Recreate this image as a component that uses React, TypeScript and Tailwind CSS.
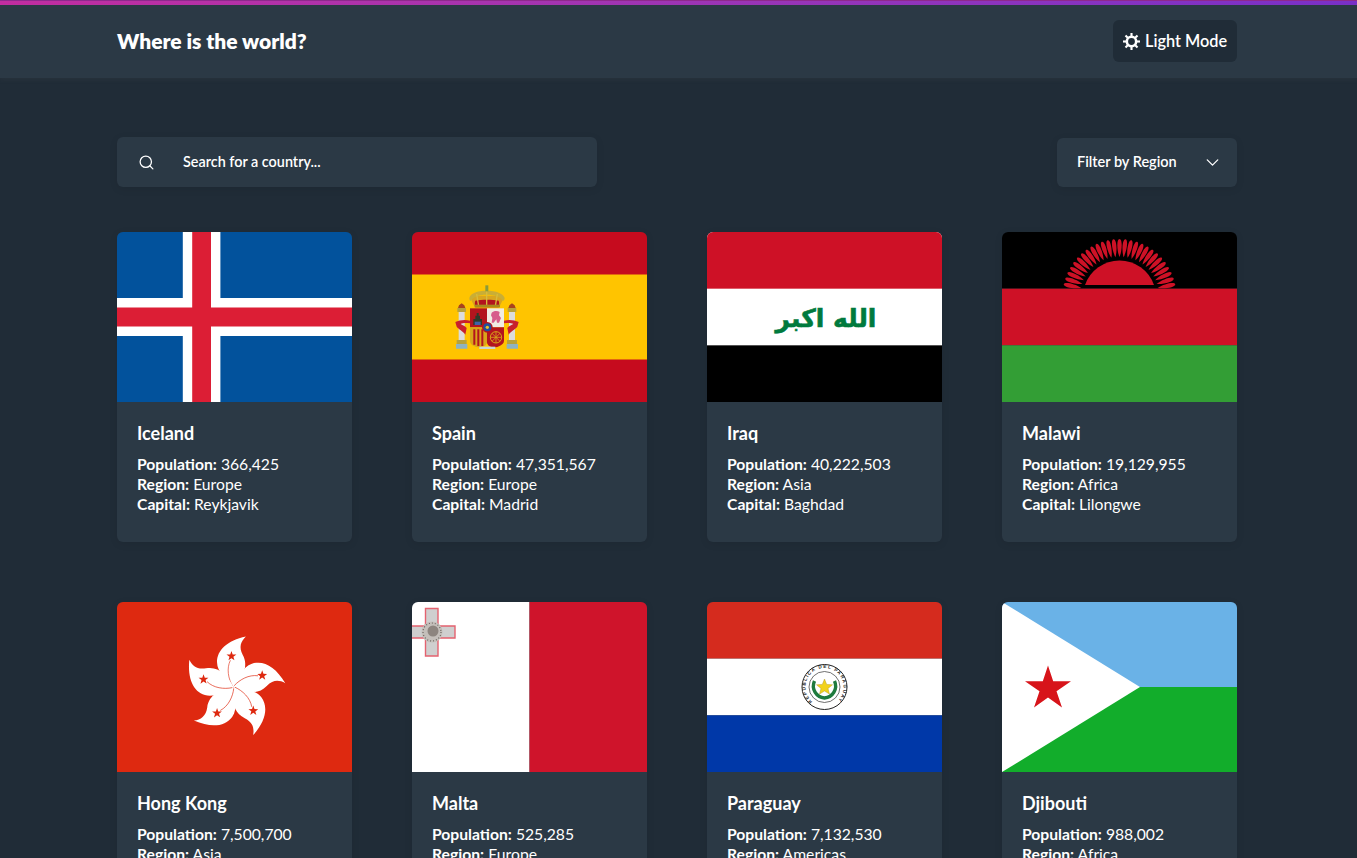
import { Search, ChevronDown } from "lucide-react";
import { ReactNode } from "react";

function SunIcon() {
  return (
    <svg viewBox="0 0 16 16" className="h-[17px] w-[17px]" fill="none" stroke="white">
      <circle cx="8" cy="8" r="4.4" strokeWidth="2.4" />
      {[0, 45, 90, 135, 180, 225, 270, 315].map((a) => (
        <path key={a} d="M8 0V3.4" strokeWidth="2" transform={`rotate(${a} 8 8)`} />
      ))}
    </svg>
  );
}

function Iceland() {
  return (
    <svg viewBox="0 0 25 18" preserveAspectRatio="none" className="block h-full w-full">
      <rect width="25" height="18" fill="#02529c" />
      <path d="M7 0h4v18H7zM0 7h25v4H0z" fill="#fff" />
      <path d="M8 0h2v18H8zM0 8h25v2H0z" fill="#dc1e35" />
    </svg>
  );
}

function Spain() {
  return (
    <svg viewBox="0 0 235 170" className="block h-full w-full">
      <rect width="235" height="170" fill="#c60b1e" />
      <rect y="42.5" width="235" height="85" fill="#ffc400" />
      <g transform="translate(28 38) scale(0.3333)">
        {/* pillars */}
        <path d="M48 222h34v14H48zM200 222h34v14h-34z" fill="#8fb3bf" />
        <path d="M56 125h18v85H56zM207 125h18v85h-18z" fill="#dcdcdc" />
        <path d="M52 114h26v12H52zM203 114h26v12h-26zM50 210h30v12H50zM201 210h30v12h-30z" fill="#b8a23a" />
        <path d="M54 114l3-8 8-6 8 6 3 8zM205 114l3-8 8-6 8 6 3 8z" fill="#a8441e" />
        <path d="M46 156c12-6 30-8 44-4v8c-12-2-22-2-28 2 6 4 14 6 18 12l-4 20c-8-12-20-16-26-24z" fill="#c8202c" />
        <path d="M236 156c-12-6-30-8-44-4v8c12-2 22-2 28 2-6 4-14 6-18 12l4 20c8-12 20-16 26-24z" fill="#c8202c" />
        {/* shield */}
        <path d="M90 115h51v57H90z" fill="#b3141e" />
        <path d="M141 115h51v57h-51z" fill="#f0ece4" />
        <path d="M90 172h51v44c0 8-8 14-20 16-14 0-31-6-31-20z" fill="#d9a41a" />
        <path d="M141 172h51v40c0 12-18 20-30 20-10 0-21-6-21-16z" fill="#b3141e" />
        <path d="M100 178h6v46h-6zM112 178h6v50h-6zM124 178h6v50h-6z" fill="#b3141e" />
        <path d="M100 165v-18h6v-10h4v-8h6v8h4v10h6v18z" fill="#2e3a2a" />
        <path d="M104 165v-10h18v10z" fill="#3f62a8" />
        <path d="M155 128c6-6 18-6 24-2l-2 10 6 8-6 14h-6l-2-10-8 10h-6l2-14-4-8z" fill="#d75c8c" />
        <circle cx="142" cy="172" r="16" fill="#b3141e" />
        <circle cx="142" cy="172" r="12" fill="#1f4ea0" />
        <circle cx="142" cy="172" r="5" fill="#e6c22c" />
        <circle cx="168" cy="202" r="17" fill="none" stroke="#d9a41a" strokeWidth="3" />
        <path d="M168 185v34M151 202h34M156 190l24 24M180 190l-24 24" stroke="#d9a41a" strokeWidth="2.5" />
        <path d="M118 230h48v7h-48z" fill="#c9d4d6" />
        {/* crown */}
        <path d="M104 110c-8-14-12-22-8-30 6-4 86-4 90 0 4 8 0 16-8 30z" fill="#d9a520" />
        <path d="M106 112c-2-8-2-14 0-20 20-4 50-4 70 0 2 6 2 12 0 20z" fill="#b3141e" />
        <path d="M88 84c2-14 24-22 52-22s50 8 54 22c0 6-4 10-8 8 0-10-22-18-46-18s-44 8-46 18c-4 2-6-2-6-8z" fill="#c9ae36" />
        <path d="M110 72l6 36M172 72l-6 36M140 62v46" fill="none" stroke="#d9bc3a" strokeWidth="4" />
        <path d="M104 104h76v8h-76z" fill="#a88a1e" />
        <path d="M136 46h9v18h-9z" fill="#8a9a3a" />
      </g>
    </svg>
  );
}

function Iraq() {
  return (
    <svg viewBox="0 0 235 170" className="block h-full w-full">
      <rect width="235" height="170" fill="#fff" />
      <rect width="235" height="56.67" fill="#ce1126" />
      <rect y="113.33" width="235" height="56.67" fill="#000" />
      <text
        x="119"
        y="95"
        textAnchor="middle"
        direction="rtl"
        fill="#007a3d"
        stroke="#007a3d"
        strokeWidth="0.6"
        fontFamily="'DejaVu Sans', sans-serif"
        fontWeight="700"
        fontSize="25"
      >
        الله اكبر
      </text>
    </svg>
  );
}

function Malawi() {
  const rays = Array.from({ length: 27 }, (_, i) => -78 + i * 6);
  return (
    <svg viewBox="0 0 235 170" className="block h-full w-full">
      <rect width="235" height="56.67" fill="#000" />
      <rect y="56.67" width="235" height="56.67" fill="#ce1126" />
      <rect y="113.33" width="235" height="56.67" fill="#339e35" />
      <path d="M83 53a36.5 36.5 0 0 1 69 0z" fill="#ce1126" />
      {rays.map((a) => (
        <path
          key={a}
          d="M117.5 25C114.6 18 114.6 7 117.5 7C120.4 7 120.4 18 117.5 25Z"
          fill="#ce1126"
          transform={`rotate(${a} 117.5 64)`}
        />
      ))}
    </svg>
  );
}

function HongKong() {
  return (
    <svg viewBox="0 0 235 170" className="block h-full w-full">
      <rect width="235" height="170" fill="#de2910" />
      <g transform="translate(116.5 85) scale(1.03)">
        {[0, 72, 144, 216, 288].map((a) => (
          <g key={a} transform={`rotate(${a})`}>
            <path
              d="M0 0C-6-7-16-14-16-24C-16-36-6-45 12-49C7-44 5-39 9-31C15-20 9-9 0 0Z"
              fill="#fff"
            />
            <path d="M-1-1C-5-8-7-18-3-26" fill="none" stroke="#de2910" strokeWidth="0.6" />
            <path
              d="M-2-35L-0.8-31.6L2.8-31.5L-0.1-29.3L0.9-25.9L-2-27.9L-4.9-25.9L-3.9-29.3L-6.8-31.5L-3.2-31.6Z"
              fill="#de2910"
            />
          </g>
        ))}
      </g>
    </svg>
  );
}

function Malta() {
  return (
    <svg viewBox="0 0 235 170" className="block h-full w-full">
      <rect width="117.5" height="170" fill="#fff" />
      <rect x="117.5" width="117.5" height="170" fill="#cf142b" />
      <path
        d="M13.5 6.5h12.5v17.5h17v12h-17v18H13.5v-18H-1v-12H13.5z"
        fill="#cfcfcf"
        stroke="#e4626f"
        strokeWidth="1.4"
      />
      <circle cx="20" cy="30" r="10.5" fill="#c4bfba" />
      <circle cx="21" cy="29" r="5.5" fill="#8d857f" />
      <circle cx="20" cy="30" r="9" fill="none" stroke="#6b6560" strokeWidth="1.2" strokeDasharray="1 2" />
    </svg>
  );
}

function Paraguay() {
  return (
    <svg viewBox="0 0 235 170" className="block h-full w-full">
      <rect width="235" height="56.67" fill="#d52b1e" />
      <rect y="56.67" width="235" height="56.67" fill="#fff" />
      <rect y="113.33" width="235" height="56.67" fill="#0038a8" />
      <circle cx="117.5" cy="85" r="22.5" fill="#fff" stroke="#222" strokeWidth="1" />
      <circle cx="117.5" cy="85" r="15.5" fill="#fff" stroke="#333" strokeWidth="0.7" />
      <defs>
        <path id="seal-ring" d="M98.5 85a19 19 0 1 1 38 0a19 19 0 0 1 -38 0" />
      </defs>
      <g transform="rotate(-50 117.5 85)">
        <text fontFamily="'Liberation Sans', sans-serif" fontSize="4.6" fontWeight="700" fill="#222">
          <textPath href="#seal-ring" textLength="90" lengthAdjust="spacing">
            REPUBLICA DEL PARAGUAY
          </textPath>
        </text>
      </g>
      <path d="M107.5 79a12 12 0 0 0 10 17a12 12 0 0 0 10-17" fill="none" stroke="#1f7a3d" strokeWidth="3.4" />
      <path
        d="M117.5 77l2.2 5.4 5.8.4-4.5 3.7 1.5 5.6-5-3.1-5 3.1 1.5-5.6-4.5-3.7 5.8-.4z"
        fill="#f2d21c"
        stroke="#a99115"
        strokeWidth="0.4"
      />
    </svg>
  );
}

function Djibouti() {
  return (
    <svg viewBox="0 0 235 170" className="block h-full w-full">
      <rect width="235" height="85" fill="#6ab2e7" />
      <rect y="85" width="235" height="85" fill="#12ad2b" />
      <path d="M0 0L138 85L0 170Z" fill="#fff" />
      <path
        d="M46 63.5L51.2 79.3H69L54.5 89.2L60 105.5L46 95.4L32 105.5L37.5 89.2L23 79.3H40.8Z"
        fill="#d7141a"
      />
    </svg>
  );
}

type Country = {
  name: string;
  population: string;
  region: string;
  capital: string;
  flag: ReactNode;
};

const COUNTRIES: Country[] = [
  { name: "Iceland", population: "366,425", region: "Europe", capital: "Reykjavik", flag: <Iceland /> },
  { name: "Spain", population: "47,351,567", region: "Europe", capital: "Madrid", flag: <Spain /> },
  { name: "Iraq", population: "40,222,503", region: "Asia", capital: "Baghdad", flag: <Iraq /> },
  { name: "Malawi", population: "19,129,955", region: "Africa", capital: "Lilongwe", flag: <Malawi /> },
  { name: "Hong Kong", population: "7,500,700", region: "Asia", capital: "City of Victoria", flag: <HongKong /> },
  { name: "Malta", population: "525,285", region: "Europe", capital: "Valletta", flag: <Malta /> },
  { name: "Paraguay", population: "7,132,530", region: "Americas", capital: "Asunción", flag: <Paraguay /> },
  { name: "Djibouti", population: "988,002", region: "Africa", capital: "Djibouti", flag: <Djibouti /> },
];

function CountryCard({ country }: { country: Country }) {
  return (
    <div className="h-[310px] overflow-hidden rounded-md bg-[#2b3945] shadow-[0_2px_8px_rgba(0,0,0,0.08)]">
      <div className="h-[170px]">{country.flag}</div>
      <div className="px-5 pt-[20px]">
        <h2 className="mb-[10px] text-[18px] leading-[22px] font-bold">{country.name}</h2>
        <p className="text-[15.7px] leading-[20px]">
          <b className="font-bold">Population:</b> {country.population}
        </p>
        <p className="text-[15.7px] leading-[20px]">
          <b className="font-bold">Region:</b> {country.region}
        </p>
        <p className="text-[15.7px] leading-[20px]">
          <b className="font-bold">Capital:</b> {country.capital}
        </p>
      </div>
    </div>
  );
}

export default function App() {
  return (
    <div className="h-[858px] overflow-hidden bg-[#202c37] font-['Lato','Noto_Sans',sans-serif] text-white">
      <div className="h-[5px] border-t border-t-[#8e2a8c] bg-gradient-to-r from-[#c22da0] to-[#7a30c8]" />
      <header className="h-[73px] bg-[#2b3945] pb-[1px] pl-[117px] shadow-[0_2px_5px_rgba(130,130,130,0.08)]">
        <div className="flex h-full w-[1120px] items-center justify-between">
          <h1 className="mb-[1px] text-[21px] leading-[26px] font-extrabold">Where is the world?</h1>
          <button className="flex h-[42px] w-[124px] items-center rounded-md bg-[#202c37] pl-[10px] text-[16.3px] leading-[20px] font-semibold">
            <SunIcon />
            <span className="ml-[5px]">Light Mode</span>
          </button>
        </div>
      </header>
      <main className="w-[1237px] pt-[59px] pl-[117px]">
        <div className="flex items-end justify-between">
          <div className="flex h-[50px] w-[480px] items-center rounded-md bg-[#2b3945] pl-[21px] shadow-[0_2px_8px_rgba(0,0,0,0.08)]">
            <Search size={17} strokeWidth={1.8} />
            <span className="mb-[1px] ml-[28px] text-[14.4px] font-semibold">Search for a country...</span>
          </div>
          <div className="flex h-[49px] w-[180px] items-center justify-between rounded-md bg-[#2b3945] pr-[14px] pl-[20px] shadow-[0_2px_8px_rgba(0,0,0,0.08)]">
            <span className="mb-[1px] text-[14.5px] font-semibold">Filter by Region</span>
            <ChevronDown size={21} strokeWidth={1.5} />
          </div>
        </div>
        <div className="mt-[45px] grid grid-cols-[repeat(4,235px)] gap-[60px]">
          {COUNTRIES.map((c) => (
            <CountryCard key={c.name} country={c} />
          ))}
        </div>
      </main>
    </div>
  );
}
